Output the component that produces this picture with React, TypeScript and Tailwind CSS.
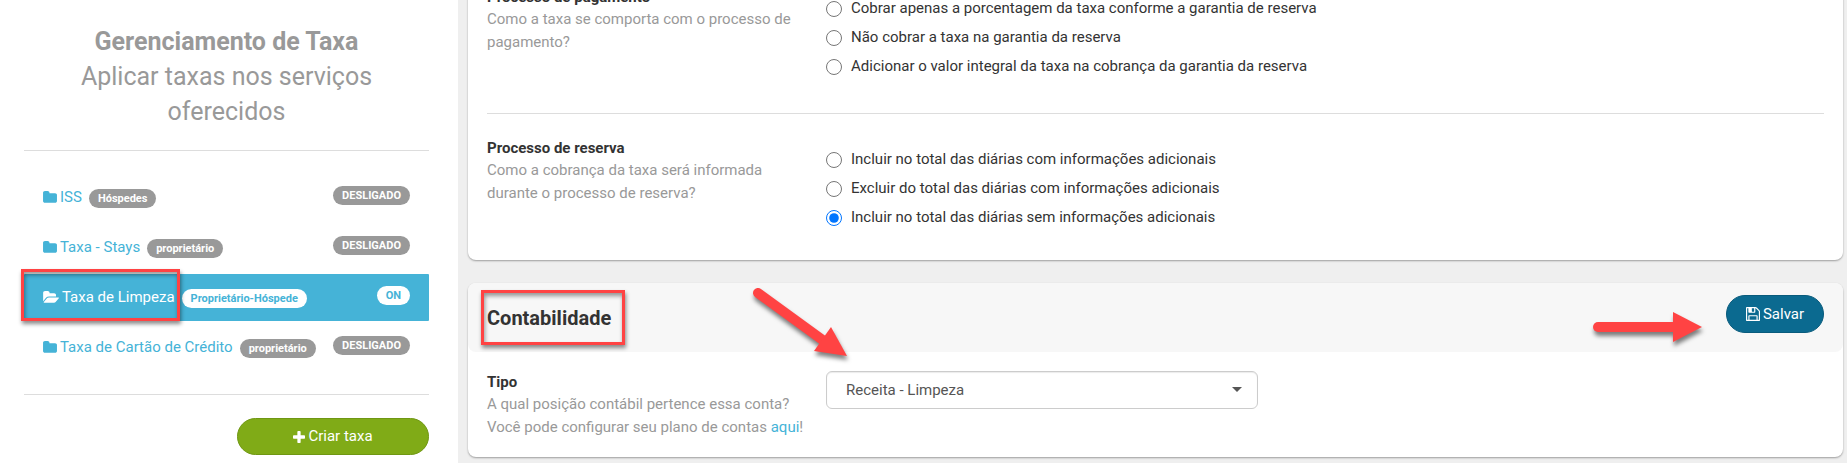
import type { ReactNode } from 'react'

const ICONS = {
  folder:
    'M1664 608v704q0 92-66 158t-158 66h-1216q-92 0-158-66t-66-158v-960q0-92 66-158t158-66h320q92 0 158 66t66 158v32h672q92 0 158 66t66 158z',
  folderOpen:
    'M1879 952q0 31-31 66l-336 396q-43 51-120.500 86.500t-143.500 35.500h-1088q-34 0-60.500-13t-26.500-43q0-31 31-66l336-396q43-51 120.500-86.500t143.500-35.500h1088q34 0 60.500 13t26.500 43zm-343-344v160h-832q-94 0-197 47.500t-164 119.500l-337 396-5 6q0-4-.5-12.500t-.5-12.500v-960q0-92 66-158t158-66h320q92 0 158 66t66 158v32h544q92 0 158 66t66 158z',
  plus: 'M1600 736v192q0 40-28 68t-68 28h-416v416q0 40-28 68t-68 28h-192q-40 0-68-28t-28-68v-416h-416q-40 0-68-28t-28-68v-192q0-40 28-68t68-28h416v-416q0-40 28-68t68-28h192q40 0 68 28t28 68v416h416q40 0 68 28t28 68z',
  save: 'M512 1536h768v-384h-768v384zm896 0h128v-896q0-14-10-38.500t-20-34.500l-281-281q-10-10-34-20t-39-10v416q0 40-28 68t-68 28h-576q-40 0-68-28t-28-68v-416h-128v1280h128v-416q0-40 28-68t68-28h832q40 0 68 28t28 68v416zm-384-928v-320q0-13-9.500-22.500t-22.500-9.500h-192q-13 0-22.500 9.500t-9.500 22.500v320q0 13 9.500 22.500t22.500 9.500h192q13 0 22.500-9.500t9.500-22.500zm640 32v928q0 40-28 68t-68 28h-1344q-40 0-68-28t-28-68v-1344q0-40 28-68t68-28h928q40 0 88 20t76 48l280 280q28 28 48 76t20 88z',
}

const FEES = [
  { name: 'ISS', tag: 'Hóspedes', on: false },
  { name: 'Taxa - Stays', tag: 'proprietário', on: false },
  { name: 'Taxa de Limpeza', tag: 'Proprietário-Hóspede', on: true },
  { name: 'Taxa de Cartão de Crédito', tag: 'proprietário', on: false },
]

const PAYMENT_OPTIONS = [
  'Cobrar apenas a porcentagem da taxa conforme a garantia de reserva',
  'Não cobrar a taxa na garantia da reserva',
  'Adicionar o valor integral da taxa na cobrança da garantia da reserva',
]

const BOOKING_OPTIONS = [
  'Incluir no total das diárias com informações adicionais',
  'Excluir do total das diárias com informações adicionais',
  'Incluir no total das diárias sem informações adicionais',
]

function Badge({ on, children }: { on: boolean; children: ReactNode }) {
  return (
    <span
      className={`h-[19px] shrink-0 rounded-full px-[9px] text-[11px] leading-[19px] font-bold ${
        on ? 'bg-white text-[#45b3d7]' : 'bg-[#999] text-white'
      }`}
    >
      {children}
    </span>
  )
}

function FeeItem({ name, tag, on }: (typeof FEES)[number]) {
  return (
    <li className={`relative rounded-[1px] ${on ? 'bg-[#45b3d7] text-white' : 'text-[#45b3d7]'}`}>
      <a href="#" className="flex h-[47px] items-center px-[19px]">
        <svg
          viewBox={on ? '0 0 1879 1792' : '0 0 1664 1792'}
          className={`h-[15px] shrink-0 fill-current ${on ? 'w-4' : 'w-[14px]'}`}
        >
          <path d={on ? ICONS.folderOpen : ICONS.folder} />
        </svg>
        <span className="ml-[3px] whitespace-nowrap">{name}</span>
        <span className="ml-[7px] flex pt-0.5">
          <Badge on={on}>{tag}</Badge>
        </span>
        <span className="ml-auto flex pb-1">
          <Badge on={on}>{on ? 'ON' : 'DESLIGADO'}</Badge>
        </span>
      </a>
      {on && <Highlight className="-top-[5px] -left-[3px] h-[52px] w-[159px]" />}
    </li>
  )
}

function Highlight({ className }: { className: string }) {
  return (
    <span
      className={`pointer-events-none absolute border-3 border-[#ff4343] shadow-[1px_3px_4px_rgba(0,0,0,0.45),inset_1px_3px_4px_rgba(0,0,0,0.4)] ${className}`}
    />
  )
}

function Description({ title, htmlFor, children }: { title: string; htmlFor?: string; children: ReactNode }) {
  return (
    <div className="w-[339px] shrink-0 pr-5">
      {htmlFor ? (
        <label htmlFor={htmlFor} className="block leading-[22px] font-bold">
          {title}
        </label>
      ) : (
        <h3 className="leading-[22px] font-bold">{title}</h3>
      )}
      <p className="leading-[23px] text-[#999]">{children}</p>
    </div>
  )
}

function Options({ name, label, items, selected }: { name: string; label: string; items: string[]; selected?: number }) {
  return (
    <div role="radiogroup" aria-label={label} className="pt-2">
      {items.map((item, i) => (
        <label key={item} className="flex h-[29px] items-center gap-[9px]">
          <input type="radio" name={name} defaultChecked={i === selected} className="size-4 accent-[#0075ff]" />
          {item}
        </label>
      ))}
    </div>
  )
}

export default function App() {
  return (
    <div className="flex min-h-screen overflow-hidden bg-[#efefef] font-[Roboto,sans-serif] text-[15px] text-[#333]">
      <aside className="w-[458px] shrink-0 bg-white pt-6 pr-[29px] pl-6">
        <header className="border-b border-[#ddd] px-10 pb-[21px] text-center text-[25px] leading-[35px] text-[#999]">
          <h1 className="font-bold">Gerenciamento de Taxa</h1>
          <p>Aplicar taxas nos serviços oferecidos</p>
        </header>
        <ul className="flex flex-col gap-[3px] border-b border-[#ddd] py-[23px]">
          {FEES.map((fee) => (
            <FeeItem key={fee.name} {...fee} />
          ))}
        </ul>
        <button
          type="button"
          className="mt-[23px] ml-auto flex h-[37px] w-48 items-center justify-center gap-[3px] rounded-full border border-[#6f9713] bg-[#80ab17] text-white"
        >
          <svg viewBox="192 128 1408 1408" className="size-3 fill-current">
            <path d={ICONS.plus} />
          </svg>
          Criar taxa
        </button>
      </aside>

      <main className="min-w-0 flex-1 pr-1 pl-[10px]">
        <section className="-mt-[34px] rounded-lg bg-white px-[19px] pt-5 pb-7 shadow-[0_1px_2px_rgba(0,0,0,0.35)]">
          <div className="flex border-b border-[#ddd] pb-8">
            <Description title="Processo de pagamento">
              Como a taxa se comporta com o processo de pagamento?
            </Description>
            <Options name="payment" label="Processo de pagamento" items={PAYMENT_OPTIONS} />
          </div>
          <div className="flex pt-[23px]">
            <Description title="Processo de reserva">
              Como a cobrança da taxa será informada durante o processo de reserva?
            </Description>
            <Options name="booking" label="Processo de reserva" items={BOOKING_OPTIONS} selected={2} />
          </div>
        </section>

        <section className="relative mt-[23px] mb-1.5 rounded-lg bg-white shadow-[0_1px_2px_rgba(0,0,0,0.35)]">
          <header className="flex h-[69px] items-start justify-between rounded-lg bg-[#f7f7f7] px-[19px] pt-3">
            <h2 className="text-xl leading-[46px] font-bold">Contabilidade</h2>
            <button
              type="button"
              className="flex h-[38px] w-[98px] items-center justify-center gap-[3px] rounded-full border border-[#095b7c] bg-[#0b6a90] text-white"
            >
              <svg viewBox="128 128 1536 1536" className="size-[14px] fill-current">
                <path d={ICONS.save} />
              </svg>
              Salvar
            </button>
          </header>
          <div className="flex px-[19px] pt-[19px] pb-[18px]">
            <Description title="Tipo" htmlFor="account-type">
              A qual posição contábil pertence essa conta? <br />
              <span className="whitespace-nowrap">
                Você pode configurar seu plano de contas{' '}
                <a href="#" className="text-[#45b3d7]">
                  aqui
                </a>
                !
              </span>
            </Description>
            <div className="relative h-[38px] w-[432px]">
              <select
                id="account-type"
                className="h-full w-full appearance-none rounded-md border border-[#ccc] bg-white px-[19px] text-[#555] shadow-[inset_0_1px_1px_rgba(0,0,0,0.08)]"
              >
                <option>Receita - Limpeza</option>
              </select>
              <span className="pointer-events-none absolute top-4 right-4 border-x-5 border-t-5 border-x-transparent border-t-[#555]" />
            </div>
          </div>

          {/* Callouts */}
          <Highlight className="top-[7px] left-[13px] h-[55px] w-36" />
          <svg
            viewBox="0 0 100 76"
            className="pointer-events-none absolute top-1 left-[282px] h-[76px] w-[100px] fill-[#ff4343] stroke-[#ff4343] drop-shadow-[1px_4px_2px_rgba(0,0,0,0.5)]"
          >
            <path d="M8 6L74 54" strokeWidth="10" strokeLinecap="round" />
            <path d="M97 69L81 40L64 64Z" stroke="none" />
          </svg>
          <svg
            viewBox="0 0 112 32"
            className="pointer-events-none absolute top-[28px] right-[140px] h-8 w-28 fill-[#ff4343] stroke-[#ff4343] drop-shadow-[1px_4px_2px_rgba(0,0,0,0.5)]"
          >
            <path d="M7 16H86" strokeWidth="10" strokeLinecap="round" />
            <path d="M111 16L82 1V31Z" stroke="none" />
          </svg>
        </section>
      </main>
    </div>
  )
}
